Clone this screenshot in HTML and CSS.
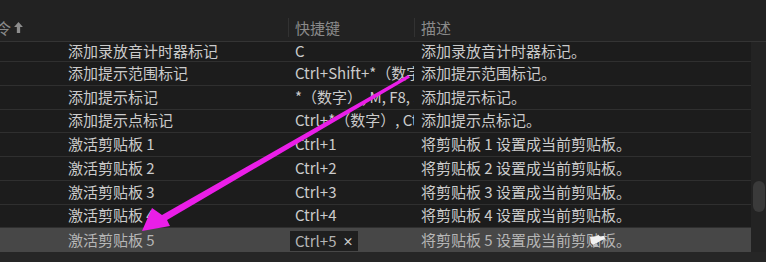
FILE: index.html
```html
<!DOCTYPE html>
<html lang="zh-CN">
<head>
<meta charset="utf-8">
<title>键盘快捷键</title>
<link rel="stylesheet" href="styles.css">
</head>
<body>
<div class="panel">
  <div class="header">
    <div class="hcell c1"><span class="cut">命令</span><svg class="sort" viewBox="0 0 8 10" width="8" height="10"><path d="M4 0 L8 4.6 L5.5 4.6 L5.5 10 L2.5 10 L2.5 4.6 L0 4.6 Z" fill="#8d8d8d"/></svg></div>
    <div class="hcell c2">快捷键</div>
    <div class="hcell c3">描述</div>
  </div>
  <div class="body">
    <div class="rows">
      <div class="row first"><div class="cell c1">添加录放音计时器标记</div><div class="cell c2"><span class="clip">C</span></div><div class="cell c3">添加录放音计时器标记。</div></div>
      <div class="row"><div class="cell c1">添加提示范围标记</div><div class="cell c2"><span class="clip">Ctrl+Shift+*（数字键盘）</span></div><div class="cell c3">添加提示范围标记。</div></div>
      <div class="row"><div class="cell c1">添加提示标记</div><div class="cell c2"><span class="clip">*（数字）, M, F8, Shift+M</span></div><div class="cell c3">添加提示标记。</div></div>
      <div class="row"><div class="cell c1">添加提示点标记</div><div class="cell c2"><span class="clip">Ctrl+*（数字）, Ctrl+M</span></div><div class="cell c3">添加提示点标记。</div></div>
      <div class="row"><div class="cell c1">激活剪贴板 1</div><div class="cell c2"><span class="clip">Ctrl+1</span></div><div class="cell c3">将剪贴板 1 设置成当前剪贴板。</div></div>
      <div class="row"><div class="cell c1">激活剪贴板 2</div><div class="cell c2"><span class="clip">Ctrl+2</span></div><div class="cell c3">将剪贴板 2 设置成当前剪贴板。</div></div>
      <div class="row"><div class="cell c1">激活剪贴板 3</div><div class="cell c2"><span class="clip">Ctrl+3</span></div><div class="cell c3">将剪贴板 3 设置成当前剪贴板。</div></div>
      <div class="row"><div class="cell c1">激活剪贴板 4</div><div class="cell c2"><span class="clip">Ctrl+4</span></div><div class="cell c3">将剪贴板 4 设置成当前剪贴板。</div></div>
      <div class="row selected"><div class="cell c1">激活剪贴板 5</div><div class="cell c2"><span class="chip">Ctrl+5<span class="x">×</span></span></div><div class="cell c3">将剪贴板 5 设置成当前剪贴板。</div></div>
    </div>
    <div class="scrollbar"><div class="thumb"></div></div>
  </div>
  <svg class="arrow" width="766" height="262" viewBox="0 0 766 262">
    <polygon points="408,75 162,215 152,208 142,231 170,226 167,220 410,77.5" fill="#ea1ee8"/>
  </svg>
  <svg class="cursor" width="20" height="16" viewBox="0 0 20 16">
    <path d="M2 3 L9 2 L10 0.5 L12 2.5 L16 2 L17 5 L12 7 L9 9 L5 11 L3 9 Z" fill="#f2f2f2"/>
    <path d="M5 11 L9 9 L10 12 L6 13 Z" fill="#bdbdbd"/>
  </svg>
</div>
</body>
</html>
```
FILE: styles.css
```css
* { box-sizing: border-box; }
html, body { margin: 0; padding: 0; }
body {
  background: #232323;
  font-family: "Noto Sans CJK SC", "Noto Sans", sans-serif;
  font-size: 15px;
  width: 766px;
  height: 262px;
  overflow: hidden;
}
.panel {
  position: relative;
  width: 766px;
  height: 262px;
  background: #262626;
  overflow: hidden;
}
.header {
  display: flex;
  height: 42px;
  background: #222222;
  border-bottom: 1px solid #343434;
  color: #8a8a8a;
  padding-top: 18px;
}
.hcell {
  height: 19px;
  display: flex;
  align-items: center;
  white-space: nowrap;
  overflow: hidden;
}
.hcell.c1 { width: 288px; }
.hcell.c2 { width: 126px; border-left: 1px solid #323232; padding-left: 6px; }
.hcell.c3 { flex: 1; border-left: 1px solid #323232; padding-left: 6px; }
.cut { margin-left: -19px; }
.sort { margin-left: 3px; width: 9px; height: 11px; }
.body {
  display: flex;
  height: 210px;
}
.rows {
  width: 751px;
  background: #1c1c1c;
  align-self: flex-start;
}
.row {
  display: flex;
  height: 23.75px;
  border-bottom: 1px solid #2f2f2f;
  color: #cbcbcb;
  align-items: center;
  padding-bottom: 2px;
  white-space: nowrap;
}
.row.first { height: 20px; }
.row.selected {
  background: #474747;
  color: #b6b6b6;
  border-bottom: none;
  height: 24px;
  padding-bottom: 1px;
}
.cell { overflow: hidden; }
.cell.c1 { width: 288px; padding-left: 68px; }
.cell.c2 { width: 126px; padding-left: 7px; }
.cell.c3 { flex: 1; padding-left: 7px; }
.clip {
  display: block;
  max-width: 119px;
  overflow: hidden;
  white-space: nowrap;
}
.row.selected .cell.c2 { padding-left: 2px; overflow: visible; }
.chip {
  display: inline-flex;
  align-items: center;
  height: 20px;
  margin-top: 2px;
  padding: 0 4px 0 5px;
  background: #1f1f1f;
  color: #b4b4b4;
}
.chip .x { margin-left: 6px; font-size: 11px; font-weight: 700; color: #d0d0d0; }
.scrollbar {
  width: 15px;
  background: #232323;
}
.thumb {
  margin: 139px 0 0 2px;
  width: 12px;
  height: 31px;
  border-radius: 6px;
  background: #3a3a3a;
}
.arrow {
  position: absolute;
  left: 0;
  top: 0;
  pointer-events: none;
}
.cursor {
  position: absolute;
  left: 588px;
  top: 234px;
}
```
